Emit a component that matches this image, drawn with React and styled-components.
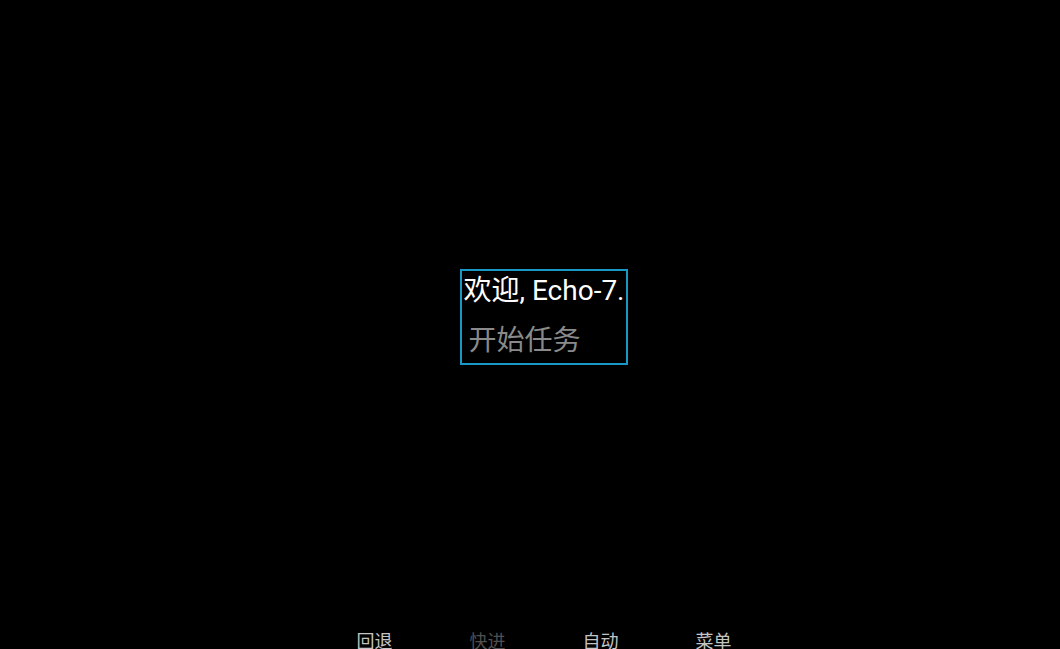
import React from 'react';
import styled, { createGlobalStyle } from 'styled-components';

const GlobalStyle = createGlobalStyle`
  html, body {
    margin: 0;
    padding: 0;
    background: #000;
    overflow: hidden;
  }
  body {
    font-family: Roboto, "Noto Sans CJK SC", sans-serif;
  }
`;

const NAV_ITEMS = [
  { label: '回退', dim: false },
  { label: '快进', dim: true },
  { label: '自动', dim: false },
  { label: '菜单', dim: false },
];

const Screen = styled.div`
  width: 100vw;
  height: 100vh;
  display: flex;
  flex-direction: column;
  padding-left: 28px;
  box-sizing: border-box;
  overflow: hidden;
`;

const Stage = styled.div`
  flex: 1;
  display: flex;
  align-items: center;
  justify-content: center;
  padding-top: 4px;
`;

const DialogBox = styled.div`
  border: 2px solid #1a98c4;
  display: flex;
  flex-direction: column;
  padding: 0 1px 2px 1px;
`;

const Greeting = styled.div`
  color: #fff;
  font-size: 28px;
  line-height: 40px;
`;

const Choice = styled.div`
  color: #8a8a8a;
  font-size: 28px;
  line-height: 40px;
  padding-left: 5px;
  margin-top: 10px;
`;

const NavBar = styled.div`
  display: flex;
  justify-content: center;
  height: 20px;
  flex-shrink: 0;
`;

const NavItem = styled.div`
  width: 113px;
  text-align: center;
  font-size: 18px;
  line-height: 26px;
  color: ${(p) => (p.dim ? '#4f4f4f' : '#c4c4c4')};
`;

export default function App() {
  return (
    <>
      <GlobalStyle />
      <Screen>
        <Stage>
          <DialogBox>
            <Greeting>欢迎, Echo-7.</Greeting>
            <Choice>开始任务</Choice>
          </DialogBox>
        </Stage>
        <NavBar>
          {NAV_ITEMS.map((item) => (
            <NavItem key={item.label} dim={item.dim}>
              {item.label}
            </NavItem>
          ))}
        </NavBar>
      </Screen>
    </>
  );
}
